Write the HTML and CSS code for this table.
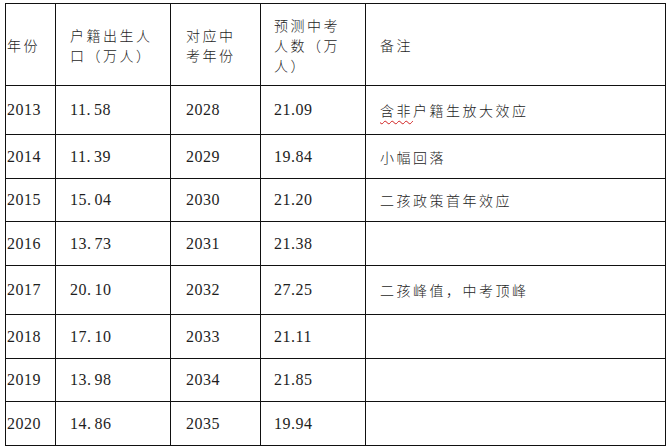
FILE: index.html
```html
<!DOCTYPE html>
<html lang="zh">
<head>
<meta charset="utf-8">
<link rel="stylesheet" href="styles.css">
</head>
<body>
<table class="grid">
  <colgroup>
    <col class="c1"><col class="c2"><col class="c3"><col class="c4"><col class="c5">
  </colgroup>
  <tr class="head">
    <td class="first zh">年份</td>
    <td class="zh">户籍出生人<br>口（万人）</td>
    <td class="zh">对应中<br>考年份</td>
    <td class="zh">预测中考<br>人数（万<br>人）</td>
    <td class="zh">备注</td>
  </tr>
  <tr class="tall">
    <td class="first num">2013</td><td class="num">11<span class="dot">.</span>58</td><td class="num">2028</td><td class="num">21.09</td>
    <td class="zh"><span class="spell">含非</span>户籍生放大效应</td>
  </tr>
  <tr class="r44">
    <td class="first num">2014</td><td class="num">11<span class="dot">.</span>39</td><td class="num">2029</td><td class="num">19.84</td>
    <td class="zh">小幅回落</td>
  </tr>
  <tr class="r43">
    <td class="first num">2015</td><td class="num">15<span class="dot">.</span>04</td><td class="num">2030</td><td class="num">21.20</td>
    <td class="zh">二孩政策首年效应</td>
  </tr>
  <tr class="r44">
    <td class="first num">2016</td><td class="num">13<span class="dot">.</span>73</td><td class="num">2031</td><td class="num">21.38</td>
    <td class="zh"></td>
  </tr>
  <tr class="tall">
    <td class="first num">2017</td><td class="num">20<span class="dot">.</span>10</td><td class="num">2032</td><td class="num">27.25</td>
    <td class="zh">二孩峰值，中考顶峰</td>
  </tr>
  <tr class="r44">
    <td class="first num">2018</td><td class="num">17<span class="dot">.</span>10</td><td class="num">2033</td><td class="num">21.11</td>
    <td class="zh"></td>
  </tr>
  <tr class="r43">
    <td class="first num">2019</td><td class="num">13<span class="dot">.</span>98</td><td class="num">2034</td><td class="num">21.85</td>
    <td class="zh"></td>
  </tr>
  <tr class="r44">
    <td class="first num">2020</td><td class="num">14<span class="dot">.</span>86</td><td class="num">2035</td><td class="num">19.94</td>
    <td class="zh"></td>
  </tr>
</table>
</body>
</html>
```
FILE: styles.css
```css
html, body {
  margin: 0;
  padding: 0;
  background: #ffffff;
}
body {
  padding: 3px 0 0 5px;
  font-family: "Liberation Serif", "Noto Sans CJK SC", serif;
  color: #1e1e1e;
}
.grid {
  border-collapse: collapse;
  table-layout: fixed;
  width: 660px;
}
.c1 { width: 50px; }
.c2 { width: 115px; }
.c3 { width: 90px; }
.c4 { width: 105px; }
.c5 { width: 300px; }
.grid td {
  border: 1px solid #111;
  padding: 0 0 0 14px;
  vertical-align: middle;
  white-space: nowrap;
  overflow: hidden;
}
.grid td.first { padding-left: 1px; }
.grid td:nth-child(3) { padding-left: 15px; }
.grid td:nth-child(4) { padding-left: 13px; }
.head td { height: 81px; }
.tall td { height: 48px; }
.r44 td { height: 43px; }
.r43 td { height: 42px; }
.zh {
  font-family: "Noto Sans CJK SC", sans-serif;
  font-size: 14px;
  font-weight: 300;
  letter-spacing: 2.5px;
  line-height: 20px;
}
.head .first { padding-left: 3px; }
.num {
  font-size: 16px;
  letter-spacing: 0.5px;
  line-height: 20px;
}
.dot {
  margin-right: 3px;
}
.spell {
  text-decoration: underline wavy #d02020;
  text-decoration-thickness: 1px;
  text-underline-offset: 4px;
}
```
